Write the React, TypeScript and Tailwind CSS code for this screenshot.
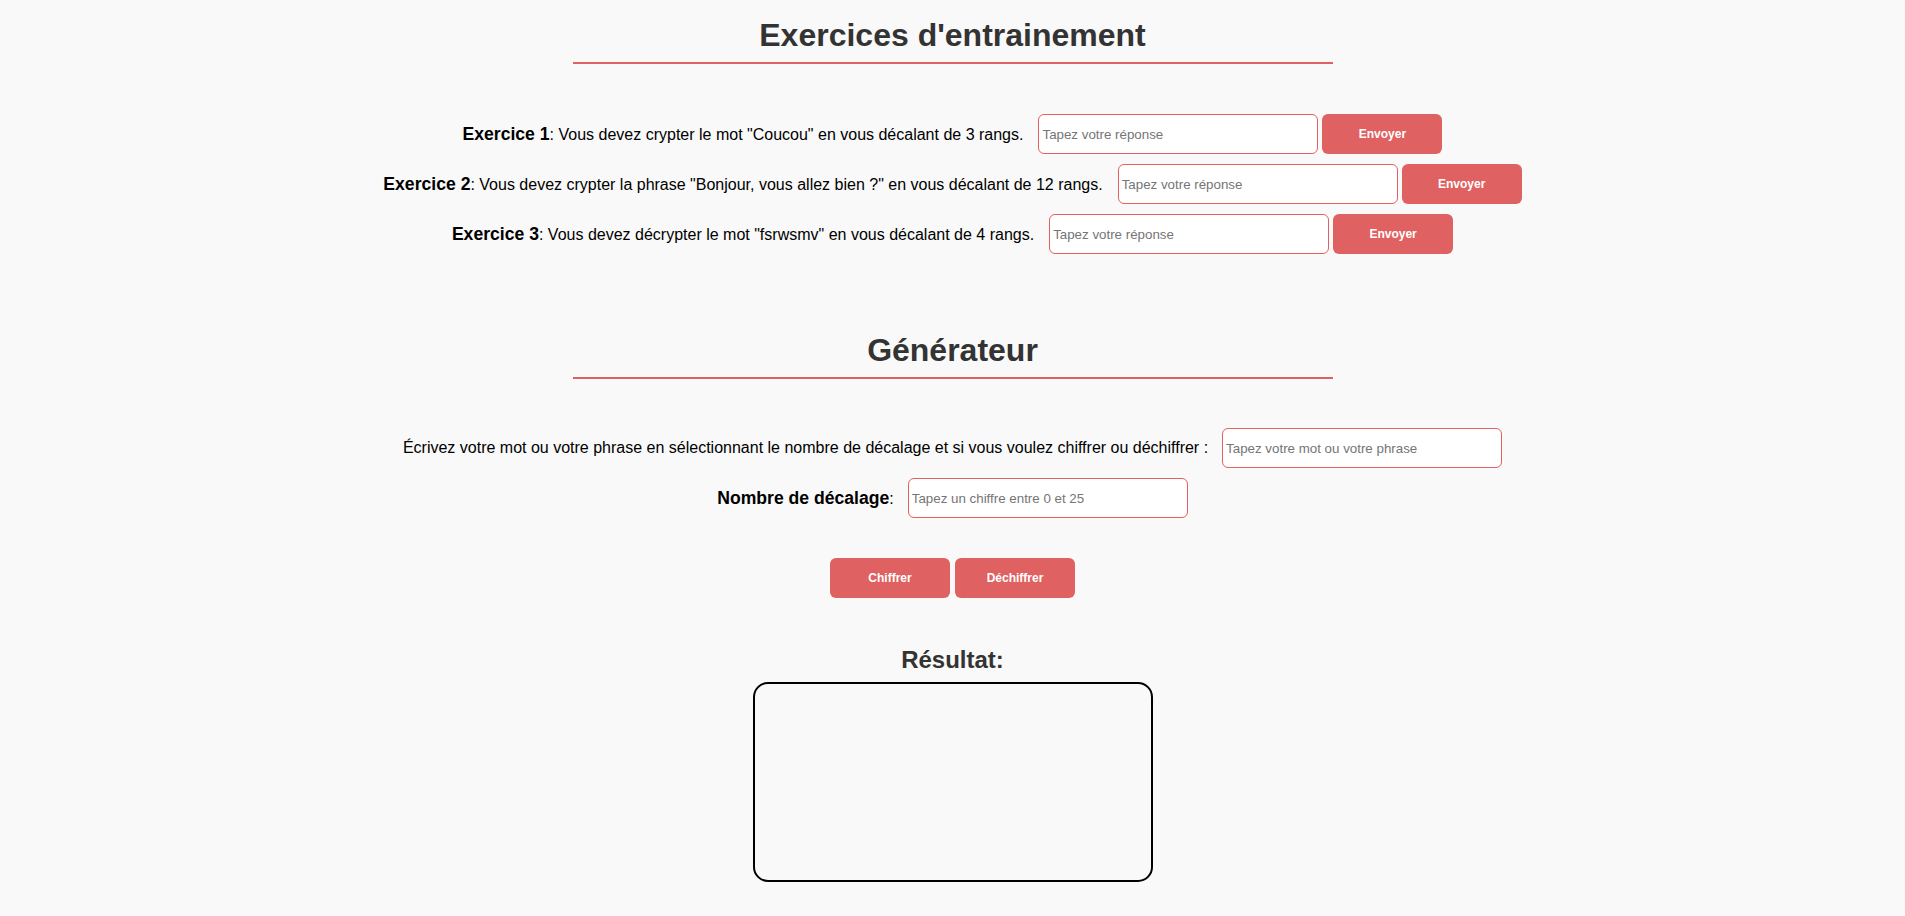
import { useState } from 'react';

const exercises = [
  { n: 1, text: 'Vous devez crypter le mot "Coucou" en vous décalant de 3 rangs.' },
  { n: 2, text: 'Vous devez crypter la phrase "Bonjour, vous allez bien ?" en vous décalant de 12 rangs.' },
  { n: 3, text: 'Vous devez décrypter le mot "fsrwsmv" en vous décalant de 4 rangs.' },
];

const inputCls =
  "h-[40px] w-[280px] rounded-[6px] border border-[#e06161] bg-white px-[3px] text-[13.33px] text-black outline-none placeholder:text-[#757575]";
const btnCls =
  "h-[40px] w-[120px] rounded-[6px] bg-[#e06161] text-[12px] font-bold text-white";

export default function App() {
  const [result] = useState('');

  return (
    <div className="min-h-screen bg-[#f9f9f9] font-['Liberation_Sans',Arial,sans-serif] text-black">
      {/* Exercices */}
      <section className="pt-[17px]">
        <h1 className="text-center text-[32px] leading-[37px] font-bold text-[#333]">
          Exercices d'entrainement
        </h1>
        <div className="mx-auto mt-2 h-[2px] w-[760px] bg-[#e06161]" />

        <div className="mt-[50px] flex flex-col gap-[10px]">
          {exercises.map((ex) => (
            <div key={ex.n} className="flex items-center justify-center">
              <span className="text-[16px]">
                <b className="text-[17.6px]">Exercice {ex.n}</b>: {ex.text}
              </span>
              <input className={`${inputCls} ml-[15px]`} placeholder="Tapez votre réponse" />
              <button className={`${btnCls} ml-[4px]`}>Envoyer</button>
            </div>
          ))}
        </div>
      </section>

      {/* Générateur */}
      <section className="mt-[78px] pb-[30px]">
        <h1 className="text-center text-[32px] leading-[37px] font-bold text-[#333]">Générateur</h1>
        <div className="mx-auto mt-2 h-[2px] w-[760px] bg-[#e06161]" />

        <div className="mt-[49px] flex flex-col gap-[10px]">
          <div className="flex items-center justify-center">
            <span className="text-[16px]">
              Écrivez votre mot ou votre phrase en sélectionnant le nombre de décalage et si vous voulez chiffrer ou déchiffrer :
            </span>
            <input className={`${inputCls} ml-[14px]`} placeholder="Tapez votre mot ou votre phrase" />
          </div>
          <div className="flex items-center justify-center">
            <span className="text-[16px]">
              <b className="text-[17.6px]">Nombre de décalage</b>:
            </span>
            <input className={`${inputCls} ml-[14px]`} placeholder="Tapez un chiffre entre 0 et 25" />
          </div>
        </div>

        <div className="mt-[40px] flex justify-center gap-[5px]">
          <button className={btnCls}>Chiffrer</button>
          <button className={btnCls}>Déchiffrer</button>
        </div>

        <h2 className="mt-[48px] text-center text-[24px] leading-[28px] font-bold text-[#333]">Résultat:</h2>
        <div className="mx-auto mt-[8px] h-[200px] w-[400px] rounded-[15px] border-2 border-black p-2 text-[16px]">
          {result}
        </div>
      </section>
    </div>
  );
}
